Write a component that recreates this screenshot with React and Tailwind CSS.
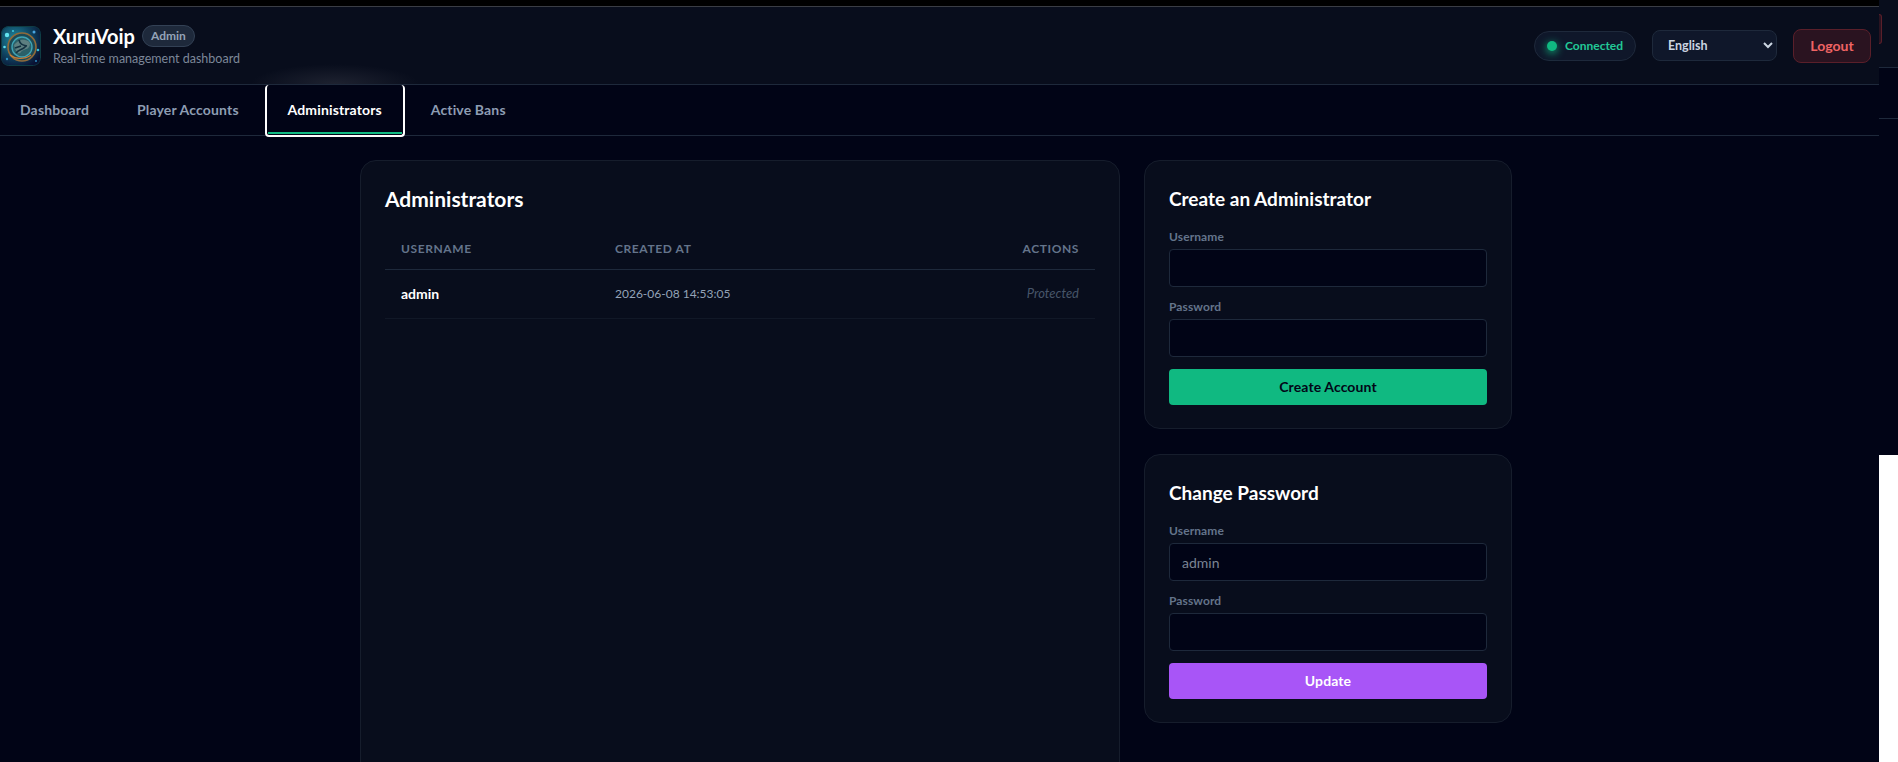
const FONT = "font-['Lato',sans-serif]"

function Logo() {
  return (
    <svg viewBox="0 0 40 40" className="w-10 h-10 shrink-0 rounded-lg">
      <defs>
        <radialGradient id="bgGlow" cx="35%" cy="35%" r="75%">
          <stop offset="0%" stopColor="#1f8ea3" />
          <stop offset="55%" stopColor="#0f4663" />
          <stop offset="100%" stopColor="#0a1233" />
        </radialGradient>
        <filter id="soft">
          <feGaussianBlur stdDeviation="0.6" />
        </filter>
      </defs>
      <rect width="40" height="40" rx="7" fill="url(#bgGlow)" />
      <g filter="url(#soft)">
        <circle cx="21" cy="21" r="14" fill="#1d4a55" stroke="#8f6a3a" strokeWidth="1.6" />
        <circle cx="21" cy="21" r="10" fill="#2c6068" stroke="#3fa3b5" strokeWidth="1.4" />
        <path d="M13 19c3-3 6-6 11-5s6 4 4 7-6 2-8 5-5 1-7-7z" fill="#5d7f80" />
        <path d="M15 27c3-4 7-3 10-7M18 14c1 4 3 5 8 6M14 22l6-2" stroke="#123240" strokeWidth="1.6" fill="none" />
        <path d="M9 29c5 4 14 5 21 0" stroke="#c47c38" strokeWidth="1.4" fill="none" />
        <circle cx="6" cy="9" r="2.2" fill="#63e3f0" />
        <circle cx="12" cy="5" r="1.1" fill="#3fc7dc" />
        <circle cx="33" cy="6" r="1.5" fill="#4aa5e0" />
        <circle cx="3.5" cy="21" r="1.3" fill="#5fe0ee" />
        <circle cx="37" cy="24" r="1.3" fill="#35c0d8" />
        <circle cx="6" cy="33" r="1.2" fill="#2f8fc0" />
        <circle cx="35" cy="35" r="1" fill="#2f8fc0" />
      </g>
      <rect x="0.5" y="0.5" width="39" height="39" rx="7" fill="none" stroke="#0f3d44" />
    </svg>
  )
}

function Field({ label, value }) {
  return (
    <div className="mb-3">
      <label className="block text-xs font-bold tracking-[0.1px] text-[#64748b] mb-1">{label}</label>
      <input
        defaultValue={value}
        className={`${FONT} w-full h-[38px] px-3 rounded bg-[#010416] border border-[#1e293b] text-sm text-[#7b8494] outline-none`}
      />
    </div>
  )
}

function FormCard({ title, button, buttonClass, username }) {
  return (
    <div className="bg-[#080d1c] border border-[#161d2c] rounded-2xl p-6 h-[269px]">
      <h3 className="text-[19px] font-bold text-white leading-7 mb-4">{title}</h3>
      <Field label="Username" value={username} />
      <Field label="Password" />
      <button className={`${FONT} w-full h-9 rounded text-sm font-bold tracking-[0.1px] ${buttonClass}`}>{button}</button>
    </div>
  )
}

export default function App() {
  return (
    <div className={`${FONT} flex h-screen w-full overflow-hidden bg-black`}>
      <div className="w-[1879px] shrink-0 flex flex-col pt-[6px]">
        <header className="relative h-[79px] shrink-0 flex items-center justify-between bg-[#080d1c] border-t border-t-[#3a3d44] border-b border-b-[#1e293b] pl-px pr-2">
          <div className="flex items-center gap-3">
            <Logo />
            <div className="pt-[2px]">
              <div className="flex items-center gap-[7px]">
                <h1 className="text-xl font-bold text-white leading-6">XuruVoip</h1>
                <span className="px-2 h-[22px] flex items-center rounded-full bg-[#1e293b] border border-[#334155] text-xs font-bold text-[#94a3b8]">Admin</span>
              </div>
              <p className="text-[12.5px] text-[#7c8798] mt-[2px]">Real-time management dashboard</p>
            </div>
          </div>
          <div className="flex items-center gap-4">
            <div className="flex items-center gap-2 h-[30px] w-[102px] pl-3 rounded-full bg-[#0f172a] border border-[#1e293b]">
              <span className="w-2.5 h-2.5 rounded-full bg-[#10b981] shadow-[0_2px_8px_#10b981]" />
              <span className="text-xs font-bold text-[#22c997]">Connected</span>
            </div>
            <select className={`${FONT} w-[125px] h-[31px] pl-[11px] rounded-lg bg-[#0f172a] border border-[#1e293b] text-[12.5px] font-bold text-[#cbd5e1] outline-none`}>
              <option>English</option>
            </select>
            <button className="w-[78px] h-[34px] rounded-lg bg-[#2a1320] border border-[#5a1f2a] text-sm font-bold text-[#f06464]">Logout</button>
          </div>
          <div className="absolute left-[250px] bottom-0 w-[170px] h-[20px] bg-[radial-gradient(ellipse_at_bottom,#1e2230_0%,transparent_70%)] pointer-events-none" />
        </header>
        <nav className="h-[51px] shrink-0 flex bg-[#010416] border-b border-[#1e293b] pl-[20px] text-sm font-bold tracking-[0.15px] text-[#8e9db3]">
          <a className="pr-6 flex items-center">Dashboard</a>
          <a className="px-6 flex items-center">Player Accounts</a>
          <a className="relative mx-[2px] flex items-center h-[52px] w-[140px] justify-center text-white border-2 border-white rounded border-t-0">
            Administrators
            <span className="absolute left-[1px] right-[1px] bottom-[1px] h-0.5 bg-[#10b981]" />
          </a>
          <a className="px-6 flex items-center">Active Bans</a>
        </nav>
        <main className="flex-1 bg-[#010416] pt-6 pl-[360px] flex gap-6 overflow-hidden">
          <section className="w-[760px] h-[640px] shrink-0 bg-[#080d1c] border border-[#161d2c] rounded-2xl p-6">
            <h2 className="text-[21px] font-bold text-white leading-7 mb-4">Administrators</h2>
            <table className="w-full table-fixed text-left">
              <thead>
                <tr className="border-b border-[#1e293b] text-xs font-bold uppercase tracking-wider text-[#64748b]">
                  <th className="w-[214px] px-4 py-3">Username</th>
                  <th className="px-4 py-3">Created At</th>
                  <th className="w-[200px] px-4 py-3 text-right">Actions</th>
                </tr>
              </thead>
              <tbody>
                <tr className="h-[49px] border-b border-[#111827]">
                  <td className="px-4 text-sm font-bold text-white">admin</td>
                  <td className="px-4 text-xs text-[#94a3b8]">2026-06-08 14:53:05</td>
                  <td className="px-4 text-[13px] italic text-right text-[#475569]">Protected</td>
                </tr>
              </tbody>
            </table>
          </section>
          <aside className="w-[368px] shrink-0 flex flex-col gap-[25px]">
            <FormCard title="Create an Administrator" button="Create Account" buttonClass="bg-[#10b981] text-[#020617]" />
            <FormCard title="Change Password" button="Update" buttonClass="bg-[#a855f7] text-white" username="admin" />
          </aside>
        </main>
      </div>
      <div className="flex-1 flex flex-col">
        <div className="h-[68px] pt-[14px] bg-[#080d1c] border-b border-[#1e293b]">
          <div className="w-[3px] h-[30px] rounded-r-lg bg-[#2a1320] border-r border-y border-[#5a1f2a]" />
        </div>
        <div className="h-[51px] bg-[#010416] border-b border-[#1e293b]" />
        <div className="h-[336px] bg-[#010416]" />
        <div className="flex-1 bg-white" />
      </div>
    </div>
  )
}
